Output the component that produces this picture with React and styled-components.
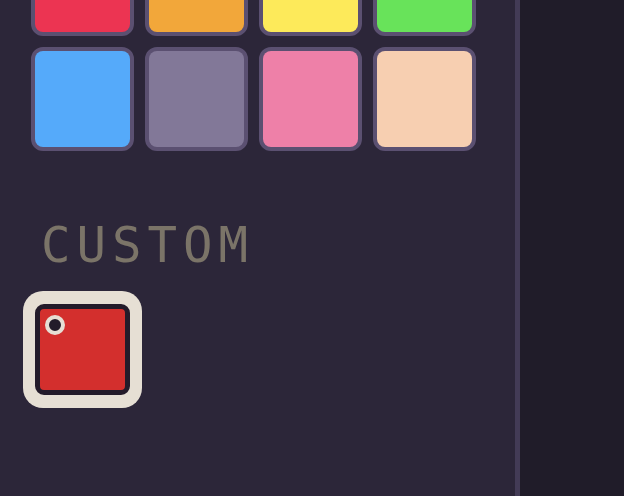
import React from "react";
import styled, { createGlobalStyle } from "styled-components";

const GlobalStyle = createGlobalStyle`
  html, body {
    margin: 0;
    padding: 0;
    width: 624px;
    height: 496px;
    overflow: hidden;
    background: #201c29;
    font-family: "Liberation Sans", Arial, sans-serif;
  }
  #root { height: 100%; }
`;

const Layout = styled.div`
  display: flex;
  width: 624px;
  height: 496px;
`;

const Panel = styled.section`
  width: 515px;
  flex: none;
  background: #2c2639;
  overflow: hidden;
  padding-left: 23px;
  box-sizing: border-box;
  display: flex;
  flex-direction: column;
`;

const Divider = styled.div`
  width: 5px;
  flex: none;
  background: #433b56;
`;

const Side = styled.aside`
  flex: 1;
  background: #201c29;
`;

const PaletteGrid = styled.div`
  display: grid;
  grid-template-columns: repeat(4, 103px);
  grid-auto-rows: 104px;
  gap: 11px;
  margin: -68px 0 0 8px;
`;

const Swatch = styled.button`
  all: unset;
  box-sizing: border-box;
  border: 4px solid #5b5071;
  border-radius: 12px;
  background: #5b5071;
  padding: 0;
  display: flex;
  cursor: pointer;

  &::before {
    content: "";
    flex: 1;
    border-radius: 8px;
    background: ${(p) => p.$color};
  }
`;

const SectionLabel = styled.h2`
  margin: 67px 0 0 18px;
  font-family: "DejaVu Sans Mono", "Liberation Mono", monospace;
  font-weight: 400;
  font-size: 49px;
  line-height: 55px;
  letter-spacing: 6px;
  color: #7b7468;
`;

const CustomButton = styled.button`
  all: unset;
  box-sizing: border-box;
  margin-top: 18px;
  width: 119px;
  height: 117px;
  padding: 13px 12px;
  border-radius: 20px;
  background: #e6dfd4;
  display: flex;
  cursor: pointer;
`;

const CustomFill = styled.div`
  position: relative;
  flex: 1;
  border: 5px solid #231b2a;
  border-radius: 9px;
  background: ${(p) => p.$color};
`;

const SelectedDot = styled.span`
  position: absolute;
  left: 5px;
  top: 6px;
  width: 12px;
  height: 12px;
  border: 4px solid #e6dfd4;
  border-radius: 50%;
  background: #231b2a;
`;

const palette = [
  "#ec3452",
  "#f2a73a",
  "#fdea5a",
  "#68e35a",
  "#55aafa",
  "#827898",
  "#ee80a8",
  "#f7cfb1",
];

export default function App() {
  return (
    <>
      <GlobalStyle />
      <Layout>
        <Panel>
          <PaletteGrid>
            {palette.map((c) => (
              <Swatch key={c} $color={c} aria-label={c} />
            ))}
          </PaletteGrid>
          <SectionLabel>CUSTOM</SectionLabel>
          <CustomButton aria-label="custom colour">
            <CustomFill $color="#d32f2d">
              <SelectedDot />
            </CustomFill>
          </CustomButton>
        </Panel>
        <Divider />
        <Side />
      </Layout>
    </>
  );
}
